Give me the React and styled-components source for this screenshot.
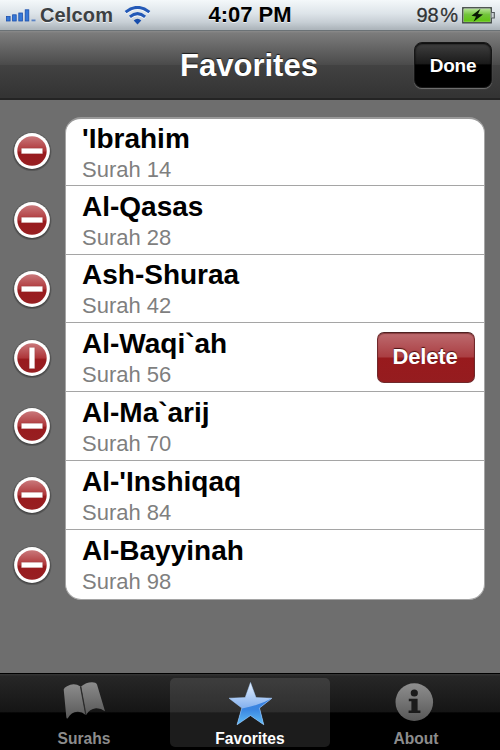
import React from "react";
import styled, { createGlobalStyle } from "styled-components";

const GlobalStyle = createGlobalStyle`
  body {
    margin: 0;
    background: #6e6e6e;
    font-family: "Liberation Sans", Arial, sans-serif;
  }
`;

const Screen = styled.div`
  display: flex;
  flex-direction: column;
  width: 500px;
  height: 750px;
  overflow: hidden;
  background: #6e6e6e;
`;

const StatusBar = styled.header`
  display: grid;
  grid-template-columns: 1fr auto 1fr;
  align-items: center;
  box-sizing: border-box;
  flex: none;
  height: 31px;
  padding: 0 5px 1px 6px;
  background: linear-gradient(#f4f8fa 0, #dde4e9 45%, #c6ced4 75%, #adb5bb 97%);
  border-bottom: 1px solid #6b7276;
  text-shadow: 0 1px 0 rgba(255, 255, 255, 0.7);
  white-space: nowrap;
`;

const StatusGroup = styled.div`
  display: flex;
  align-items: center;
  justify-content: ${props => (props.$end ? "flex-end" : "flex-start")};
`;

const Carrier = styled.span`
  margin: 0 11px 0 4px;
  font-size: 20px;
  font-weight: 700;
  line-height: 30px;
  letter-spacing: 0.15px;
  color: #3c4043;
`;

const Clock = styled.span`
  margin-right: 1px;
  font-size: 22px;
  font-weight: 700;
  line-height: 30px;
  color: #000;
`;

const Percent = styled.span`
  margin-right: 4px;
  font-size: 20px;
  line-height: 30px;
  word-spacing: -4px;
  color: #2f3234;
  -webkit-text-stroke: 0.3px #2f3234;
`;

const NavBar = styled.nav`
  display: grid;
  grid-template-columns: 1fr auto 1fr;
  align-items: center;
  box-sizing: border-box;
  flex: none;
  height: 69px;
  padding: 0 8px 2px;
  background: linear-gradient(#8b8b8b 0, #7c7c7c 3%, #4b4b4b 50%, #424242 51%, #343434 96%);
  border-bottom: 2px solid #242424;
`;

const NavTitle = styled.h1`
  grid-column: 2;
  margin: 0;
  padding: 4px 2px 0 0;
  font-size: 31px;
  line-height: 36px;
  color: #fff;
  text-shadow: 0 -1px 1px rgba(0, 0, 0, 0.7);
`;

const DoneButton = styled.button`
  justify-self: end;
  box-sizing: border-box;
  width: 78px;
  height: 46px;
  margin-top: 3px;
  padding: 2px 0 0;
  border: 1px solid #161616;
  border-radius: 8px;
  background: linear-gradient(#404040 0, #1a1a1a 47%, #000 50%, #000 100%);
  box-shadow: 0 1px 1px rgba(255, 255, 255, 0.3), inset 0 1px 2px #000;
  font: 700 19px "Liberation Sans", Arial, sans-serif;
  letter-spacing: -0.3px;
  color: #fff;
  text-shadow: 0 -1px 1px #000;
`;

const Content = styled.main`
  flex: 1;
  min-height: 0;
  padding: 17px 15px 0 12px;
`;

const List = styled.ul`
  margin: 0;
  padding: 0;
  list-style: none;
`;

const Row = styled.li`
  display: grid;
  grid-template-columns: 53px 1fr;
  height: 68.75px;

  &:first-child > div {
    padding-top: 2px;
    border-top: 2px solid #999;
    border-radius: 16px 16px 0 0;
  }

  &:last-child {
    height: 70px;
  }

  &:last-child > div {
    border-radius: 0 0 16px 16px;
  }
`;

const Cell = styled.div`
  display: flex;
  align-items: center;
  justify-content: space-between;
  box-sizing: border-box;
  padding: 2px 9px 0 16px;
  border: solid #a5a5a5;
  border-width: 0 1px 1px;
  background: #fff;
`;

const Toggle = styled.button`
  align-self: center;
  justify-self: start;
  width: 40px;
  height: 40px;
  padding: 0;
  border: 0;
  background: none;
`;

const Name = styled.h2`
  margin: 0;
  font-size: 28px;
  line-height: 34px;
  color: #000;
`;

const Detail = styled.p`
  margin: 0;
  font-size: 22px;
  line-height: 28px;
  color: #7f7f7f;
`;

const DeleteButton = styled.button`
  box-sizing: border-box;
  width: 98px;
  height: 51px;
  margin-bottom: 2px;
  padding: 0 2px 1px 0;
  border: 1px solid #70292b;
  border-top-color: #4e2122;
  border-radius: 7px;
  background: linear-gradient(#bd6b6f 0, #aa3e42 49%, #981a1d 51%, #951c1f 100%);
  box-shadow: inset 0 1px 1px rgba(70, 0, 0, 0.45);
  font: 700 22px "Liberation Sans", Arial, sans-serif;
  letter-spacing: -0.2px;
  color: #fff;
  text-shadow: 0 -1px 1px rgba(50, 0, 0, 0.8);
`;

const TabBar = styled.footer`
  display: grid;
  grid-template-columns: 160px 160px 160px;
  justify-content: center;
  column-gap: 6px;
  box-sizing: border-box;
  flex: none;
  height: 77px;
  padding: 4px 0 3px;
  border-top: 1px solid #000;
  background: linear-gradient(#363636 0, #272727 3%, #151515 50%, #000 51%);
`;

const Tab = styled.a`
  display: flex;
  flex-direction: column;
  align-items: center;
  justify-content: space-between;
  box-sizing: border-box;
  padding-top: 2px;
  border-radius: 5px;
  background: ${props => (props.$active ? "rgba(255, 255, 255, 0.11)" : "none")};
  color: ${props => (props.$active ? "#fff" : "#8c8c8c")};
  font-size: 15.6px;
  font-weight: 700;
  line-height: 16px;
`;

const SignalIcon = () => (
  <svg width="30" height="14" viewBox="0 0 30 14">
    <g fill="#3578d8" stroke="#1c4fac" strokeWidth="0.8">
      <rect x="0.5" y="8.5" width="3.6" height="4.5" />
      <rect x="6.6" y="6.8" width="3.6" height="6.2" />
      <rect x="12.8" y="5" width="3.6" height="8" />
      <rect x="19.2" y="1.8" width="3.6" height="11.2" />
    </g>
    <rect x="25.5" y="11.5" width="4" height="1.8" fill="#5a83c5" />
  </svg>
);

const WifiIcon = () => (
  <svg width="27" height="19" viewBox="0 0 27 19">
    <g fill="none" stroke="#fff" strokeOpacity="0.8" strokeWidth="3" transform="translate(0 1)">
      <path d="M1.6 6.2Q13.5 -3.8 25.4 6.2" />
      <path d="M5.9 10.8Q13.5 4.4 21.1 10.8" />
    </g>
    <g fill="none" stroke="#2359b7" strokeWidth="3">
      <path d="M1.6 6.2Q13.5 -3.4 25.4 6.2" />
      <path d="M5.9 10.8Q13.5 4.4 21.1 10.8" />
    </g>
    <path d="M9.7 14.4Q13.5 11.2 17.3 14.4L13.5 18.5Z" fill="#174dac" />
  </svg>
);

const BatteryIcon = () => (
  <svg width="33" height="17" viewBox="0 0 33 17">
    <defs>
      <linearGradient id="charge" x1="0" y1="0" x2="0" y2="1">
        <stop offset="0" stopColor="#b4e394" />
        <stop offset="0.45" stopColor="#72c43b" />
        <stop offset="1" stopColor="#5fc50f" />
      </linearGradient>
    </defs>
    <rect x="0.8" y="0.8" width="28.4" height="15" fill="#e4efe0" stroke="#3f4642" strokeWidth="1.4" />
    <rect x="1.8" y="1.8" width="26.4" height="13" fill="url(#charge)" />
    <path d="M29.5 5.5h2.8v5.5h-2.8" fill="#cbd2d6" stroke="#50575a" strokeWidth="1.1" />
    <path d="M18.5 1.8L9.5 8.8L14 9.6L11.5 14.8L21 7.4L16 6.9Z" fill="#0a1a04" />
  </svg>
);

const MinusIcon = ({ open }) => (
  <svg width="40" height="40" viewBox="0 0 40 40">
    <defs>
      <linearGradient id="stop" x1="0" y1="0" x2="0" y2="1">
        <stop offset="0" stopColor="#c9777a" />
        <stop offset="0.5" stopColor="#ae3639" />
        <stop offset="0.54" stopColor="#991b1e" />
        <stop offset="1" stopColor="#971f22" />
      </linearGradient>
      <radialGradient id="halo">
        <stop offset="0.84" stopColor="#222" stopOpacity="0.75" />
        <stop offset="1" stopColor="#222" stopOpacity="0" />
      </radialGradient>
    </defs>
    <circle cx="20" cy="20.8" r="20" fill="url(#halo)" />
    <circle cx="20" cy="20" r="17.9" fill="#fff" />
    <circle cx="20" cy="20" r="14.7" fill="url(#stop)" />
    <rect
      x="9.3"
      y="17.2"
      width="21.4"
      height="5.6"
      fill="#fff"
      stroke="#8a2a2c"
      strokeOpacity="0.4"
      strokeWidth="0.7"
      transform={open ? "rotate(90 20 20)" : undefined}
    />
  </svg>
);

const BookIcon = () => (
  <svg width="48" height="48" viewBox="0 0 48 48">
    <defs>
      <linearGradient id="page" x1="0" y1="0" x2="0" y2="1">
        <stop offset="0" stopColor="#8c8c8c" />
        <stop offset="1" stopColor="#585858" />
      </linearGradient>
    </defs>
    <path
      d="M3.7 9.5Q4 7.8 7 6.2Q14 2 20.5 6.5L25.7 35Q22 31.6 17.5 31.8Q11 32.3 8 38Q6.6 39.6 6.3 37Z"
      fill="url(#page)"
    />
    <path
      d="M21 6.5Q26 2.2 32 2.2Q36 2.2 37 4.6L45 31.2Q41 28 36 28.2Q29.5 28.8 26 35Z"
      fill="url(#page)"
    />
    <path d="M20.6 6.6L25.8 34.5" stroke="#2c2c2c" strokeWidth="1.3" />
  </svg>
);

const STAR = "M24.5 2.5L30 17.6L46 18.2L33.5 28L37.8 44.8L24.5 35.6L11 44.8L15.8 28L3 18.2L19.2 17.6Z";

const StarIcon = () => (
  <svg width="48" height="48" viewBox="0 0 48 48">
    <defs>
      <linearGradient id="star" x1="0" y1="0" x2="0" y2="1">
        <stop offset="0" stopColor="#f0f6ff" />
        <stop offset="0.55" stopColor="#8ab5f0" />
        <stop offset="1" stopColor="#78adea" />
      </linearGradient>
      <linearGradient id="starShade" x1="0" y1="0" x2="0" y2="1">
        <stop offset="0" stopColor="#3a7fdf" />
        <stop offset="0.4" stopColor="#3a86e2" />
        <stop offset="1" stopColor="#6bcafa" />
      </linearGradient>
      <clipPath id="starClip">
        <path d={STAR} />
      </clipPath>
    </defs>
    <g clipPath="url(#starClip)">
      <rect width="48" height="48" fill="url(#star)" />
      <path d="M0 30Q28 29 48 17V48H0Z" fill="url(#starShade)" />
    </g>
    <path d={STAR} fill="none" stroke="#a9d1ff" strokeOpacity="0.7" strokeWidth="0.7" />
  </svg>
);

const InfoIcon = () => (
  <svg width="48" height="48" viewBox="0 0 48 48">
    <defs>
      <linearGradient id="disc" x1="0" y1="0" x2="0" y2="1">
        <stop offset="0" stopColor="#8e8e8e" />
        <stop offset="1" stopColor="#585858" />
      </linearGradient>
    </defs>
    <circle cx="22.3" cy="22.1" r="18.8" fill="url(#disc)" />
    <g fill="#1b1b1b">
      <circle cx="22.3" cy="13" r="3.6" />
      <path d="M16.8 18.8H25.6V30.4H28.4V33H16.6V30.4H19.4V21.2H16.8Z" />
    </g>
  </svg>
);

const surahs = [
  { name: "'Ibrahim", number: 14 },
  { name: "Al-Qasas", number: 28 },
  { name: "Ash-Shuraa", number: 42 },
  { name: "Al-Waqi`ah", number: 56, open: true },
  { name: "Al-Ma`arij", number: 70 },
  { name: "Al-'Inshiqaq", number: 84 },
  { name: "Al-Bayyinah", number: 98 }
];

class App extends React.Component {
  render() {
    return (
      <Screen>
        <GlobalStyle />
        <StatusBar>
          <StatusGroup>
            <SignalIcon />
            <Carrier>Celcom</Carrier>
            <WifiIcon />
          </StatusGroup>
          <Clock>4:07 PM</Clock>
          <StatusGroup $end>
            <Percent>98 %</Percent>
            <BatteryIcon />
          </StatusGroup>
        </StatusBar>
        <NavBar>
          <NavTitle>Favorites</NavTitle>
          <DoneButton>Done</DoneButton>
        </NavBar>
        <Content>
          <List>
            {surahs.map(surah => (
              <Row key={surah.number}>
                <Toggle aria-label="Remove">
                  <MinusIcon open={surah.open} />
                </Toggle>
                <Cell>
                  <section>
                    <Name>{surah.name}</Name>
                    <Detail>Surah {surah.number}</Detail>
                  </section>
                  {surah.open && <DeleteButton>Delete</DeleteButton>}
                </Cell>
              </Row>
            ))}
          </List>
        </Content>
        <TabBar>
          <Tab>
            <BookIcon />
            Surahs
          </Tab>
          <Tab $active>
            <StarIcon />
            Favorites
          </Tab>
          <Tab>
            <InfoIcon />
            About
          </Tab>
        </TabBar>
      </Screen>
    );
  }
}

export default App;
